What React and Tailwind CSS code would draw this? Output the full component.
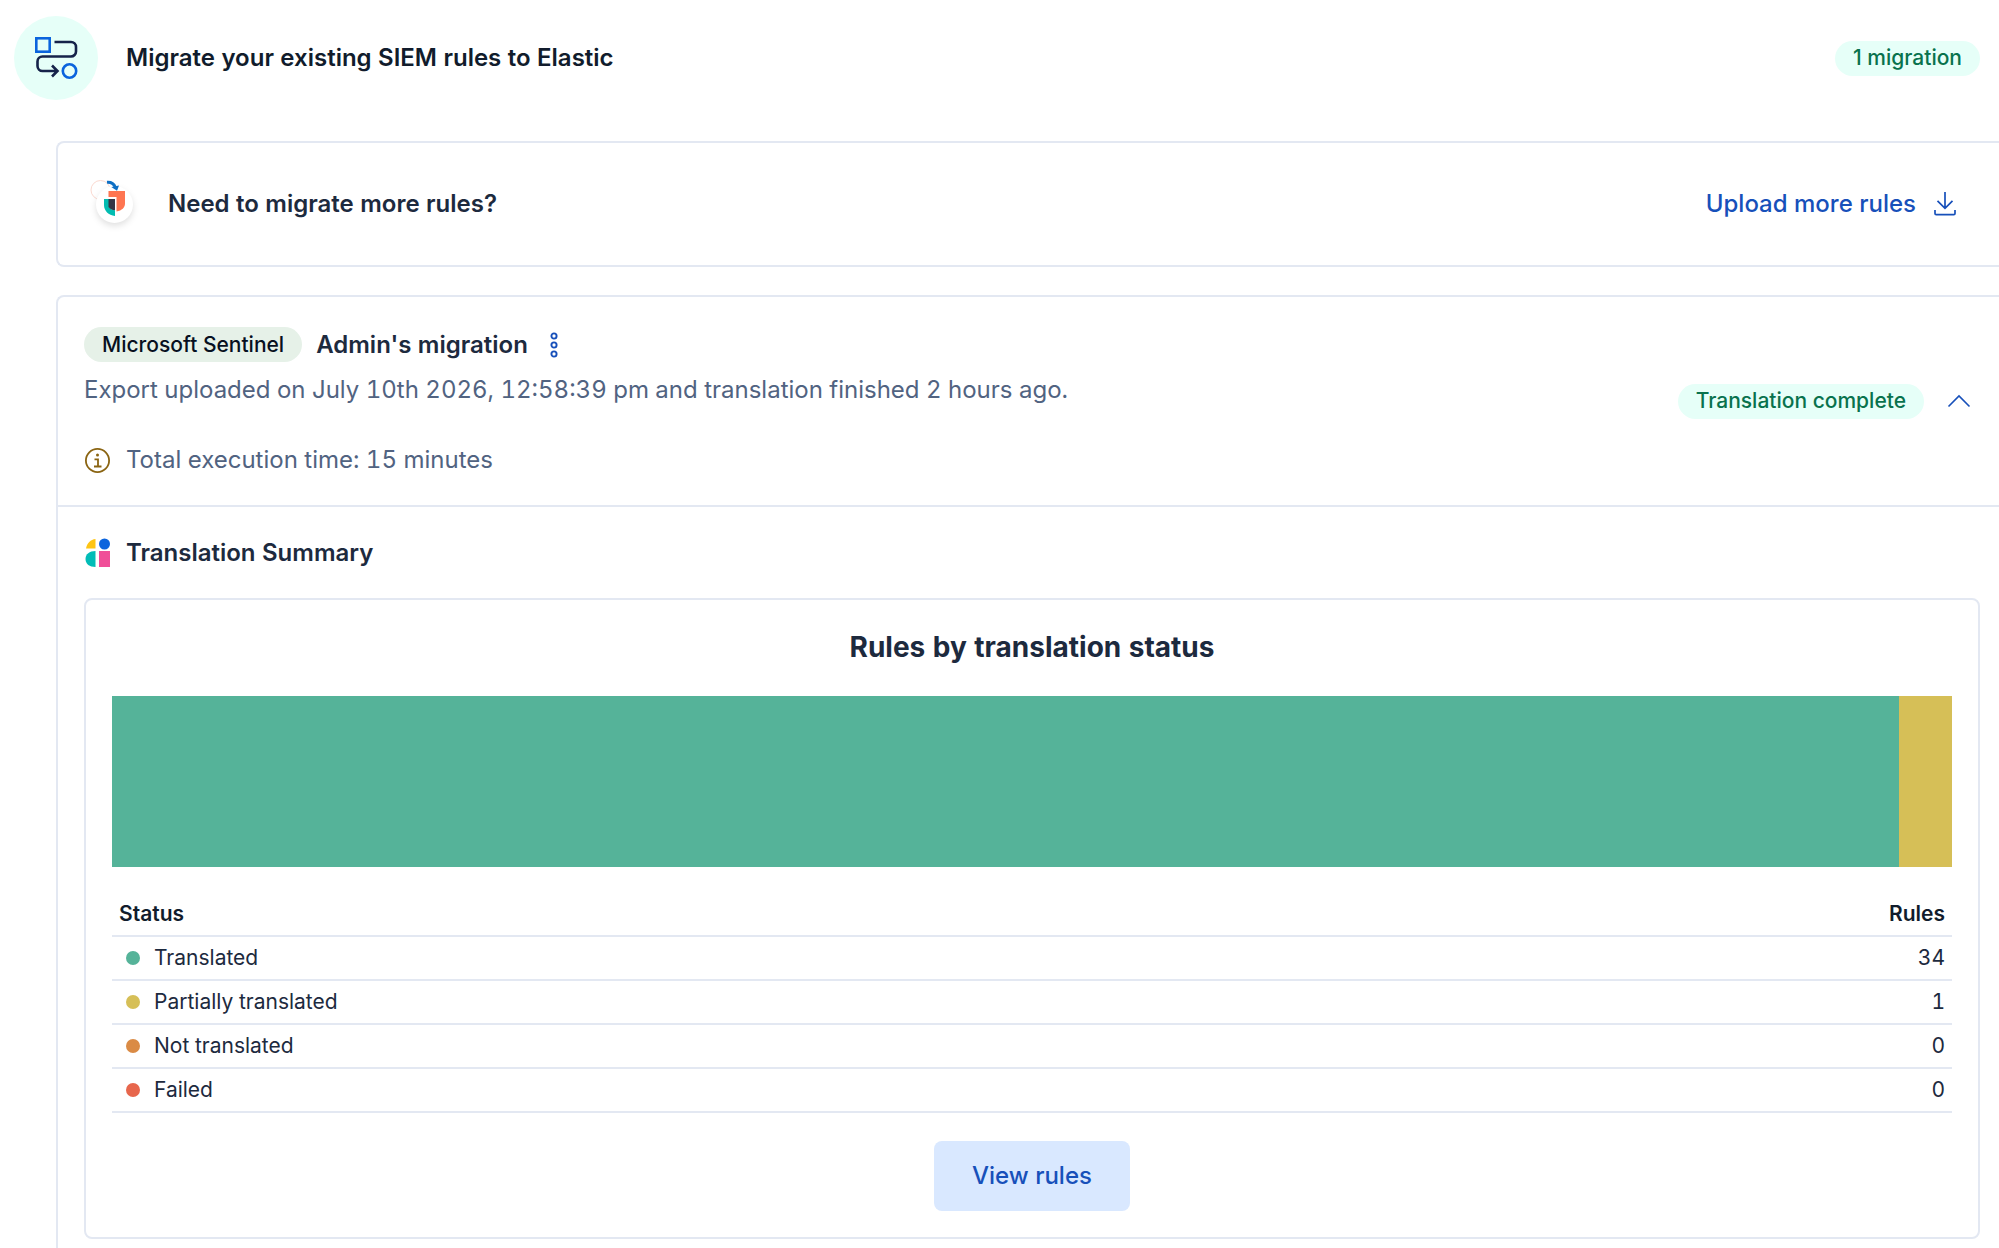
const statuses = [
  { name: "Translated", count: 34, dot: "bg-[#55b399]" },
  { name: "Partially translated", count: 1, dot: "bg-[#d6bf57]" },
  { name: "Not translated", count: 0, dot: "bg-[#da8b45]" },
  { name: "Failed", count: 0, dot: "bg-[#e7664c]" },
];

const total = statuses.reduce((sum, s) => sum + s.count, 0);

const WorkflowIcon = () => (
  <svg viewBox="0 0 44 44" className="size-11" fill="none" strokeWidth="2.6">
    <rect x="2.3" y="2.3" width="13.4" height="13.4" stroke="#0b64dd" />
    <path
      d="M20.5 6H37a5 5 0 0 1 5 5v4.500a5 5 0 0 1-5 5H8.500a5 5 0 0 0-5 5v4.500a5 5 0 0 0 5 5H23M18 29.500 23.500 35 18 40.500"
      stroke="#16234a"
    />
    <circle cx="35.500" cy="35" r="6.700" stroke="#0b64dd" />
  </svg>
);

const RulesIcon = () => (
  <svg viewBox="0 4 46 50" className="h-[50px] w-[46px] overflow-visible" fill="none">
    <circle cx="12.500" cy="15" r="9.500" fill="#fff" stroke="#fbd9d0" />
    <circle cx="26.500" cy="29.500" r="18.500" fill="#fff" className="drop-shadow-md" />
    <path d="M19 7.200c4.500-.4 7 1.800 8.300 5" stroke="#0e6fc4" strokeWidth="3" />
    <path d="m23.300 12 7.700-1.500-2 5.300Z" fill="#0e6fc4" />
    <path d="M20.500 16H37v12.500c0 4-3 7-8.500 8V22h-8Z" fill="#fe7551" />
    <path d="M16 24h5v8c1.200 2 3 3 6 3.300v5.700c-6.500-1-11-5-11-11Z" fill="#02bcb1" />
    <path d="M20.500 24H27v11.300c-3.200-.3-5.300-1.300-6.500-3.300Z" fill="#353545" />
  </svg>
);

const UploadIcon = () => (
  <svg viewBox="0 0 22 24" className="h-6 w-[22px]" fill="none" stroke="currentColor" strokeWidth="1.700">
    <path d="M11 0v16M3.500 8.800 11 16.300l7.500-7.500M1 18v3.500c0 .8.400 1.200 1.200 1.200h17.600c.8 0 1.200-.4 1.200-1.200V18" />
  </svg>
);

const DotsIcon = () => (
  <svg viewBox="0 0 8 26" className="h-[26px] w-2" fill="none" stroke="currentColor" strokeWidth="1.900">
    <circle cx="4" cy="4" r="2.600" />
    <circle cx="4" cy="13" r="2.600" />
    <circle cx="4" cy="22" r="2.600" />
  </svg>
);

const InfoIcon = () => (
  <svg viewBox="0 0 26 26" className="size-[26px] text-[#8a6412]" fill="none" stroke="currentColor" strokeWidth="1.800">
    <circle cx="13.500" cy="13.500" r="11.600" />
    <path d="M10.500 12.300H14v7.200M10 19.500h7.500" />
    <circle cx="13.500" cy="8" r="1.500" fill="currentColor" stroke="none" />
  </svg>
);

const SummaryIcon = () => (
  <svg viewBox="0 0 26 30" className="h-[30px] w-[26px]">
    <path d="M11.500 1v9.500H2C3 5 6.500 1.500 11.500 1Z" fill="#fec514" />
    <circle cx="20.500" cy="6" r="5.500" fill="#0b64dd" />
    <path d="M11.500 13v16c-6 0-10-3-10-8s4-8 10-8Z" fill="#02bcb7" />
    <path d="M15 13h11v16H15Z" fill="#f04e98" />
  </svg>
);

const ChevronIcon = () => (
  <svg viewBox="0 0 24 14" className="h-3.5 w-6" fill="none" stroke="currentColor" strokeWidth="1.600">
    <path d="M1.500 12.500 12 2l10.500 10.500" />
  </svg>
);

const Badge = ({ className, children }) => (
  <span className={`inline-flex h-[35px] items-center rounded-full px-[18px] text-[21px] font-medium proportional-nums ${className}`}>
    {children}
  </span>
);

const App = () => {
  return (
    <main className="flex min-h-screen flex-col bg-white font-['Inter',sans-serif] text-2xl text-[#1d2a3e] tabular-nums">
      {/* Page header */}
      <header className="flex items-center pt-4 pr-[19px] pl-3.5">
        <div className="flex size-[84px] items-center justify-center rounded-full bg-[#e6fff8]">
          <WorkflowIcon />
        </div>
        <h1 className="ml-7 flex-1 font-semibold text-[#111c2c]">
          Migrate your existing SIEM rules to Elastic
        </h1>
        <Badge className="bg-[#e6fff8] text-[#09724d]">1 migration</Badge>
      </header>

      <div className="mt-[41px] flex flex-1 flex-col gap-7 pl-14">
        {/* Upload panel */}
        <section className="flex h-[126px] items-center rounded-l-lg border-2 border-r-0 border-[#e3e8f2] pr-[43px] pl-[30px]">
          <RulesIcon />
          <h2 className="ml-[34px] flex-1 font-semibold">Need to migrate more rules?</h2>
          <button className="flex items-center gap-[18px] font-medium text-[#1750ba]">
            Upload more rules
            <UploadIcon />
          </button>
        </section>

        {/* Migration panel */}
        <section className="flex-1 rounded-tl-lg border-2 border-r-0 border-b-0 border-[#e3e8f2]">
          <div className="flex h-[210px] items-center border-b-2 border-[#e3e8f2] pr-7 pl-[26px]">
            <div className="flex-1 pt-1.5">
              <div className="flex items-center">
                <Badge className="bg-[#e6f1e8] text-[#07101f]">Microsoft Sentinel</Badge>
                <h2 className="ml-3.5 font-semibold">Admin's migration</h2>
                <button aria-label="Migration options" className="ml-[22px] text-[#1750ba]">
                  <DotsIcon />
                </button>
              </div>
              <p className="mt-[7px] leading-[42px] text-[#516381]">
                Export uploaded on July 10th 2026, 12:58:39 pm and translation finished 2 hours ago.
              </p>
              <p className="mt-7 flex items-center gap-4 leading-[42px] text-[#516381]">
                <InfoIcon />
                Total execution time: 15 minutes
              </p>
            </div>
            <Badge className="bg-[#e6fff8] text-[#09724d]">Translation complete</Badge>
            <button aria-label="Collapse migration" className="ml-[23px] text-[#1750ba]">
              <ChevronIcon />
            </button>
          </div>

          <div className="pt-7 pr-[19px] pl-[26px]">
            <div className="flex h-9 items-center gap-4">
              <SummaryIcon />
              <h3 className="font-semibold">Translation Summary</h3>
            </div>

            <div className="mt-[27px] rounded-lg border-2 border-[#e3e8f2] p-[26px]">
              <h4 className="text-center text-[28px] leading-[42px] font-bold">Rules by translation status</h4>

              <div className="mt-7 flex h-[171px]">
                {statuses.map((s) => (
                  <div key={s.name} className={s.dot} style={{ width: `${(s.count / total) * 100}%` }} />
                ))}
              </div>

              <table className="mt-[25px] w-full text-[21px]">
                <thead>
                  <tr className="h-11 border-b-2 border-[#e3e8f2] text-[#111c2c]">
                    <th className="px-[7px] text-left font-semibold">Status</th>
                    <th className="px-[7px] text-right font-semibold">Rules</th>
                  </tr>
                </thead>
                <tbody>
                  {statuses.map((s) => (
                    <tr key={s.name} className="h-11 border-b-2 border-[#e3e8f2]">
                      <td className="px-[7px]">
                        <div className="flex items-center gap-3.5 pl-[7px]">
                          <span className={`size-3.5 rounded-full ${s.dot}`} />
                          {s.name}
                        </div>
                      </td>
                      <td className="px-[7px] text-right">{s.count}</td>
                    </tr>
                  ))}
                </tbody>
              </table>

              <div className="mt-7 flex justify-center">
                <button className="h-[70px] w-[196px] rounded-lg bg-[#d9e8ff] font-medium text-[#1750ba]">
                  View rules
                </button>
              </div>
            </div>
          </div>
        </section>
      </div>
    </main>
  );
};

export default App;
